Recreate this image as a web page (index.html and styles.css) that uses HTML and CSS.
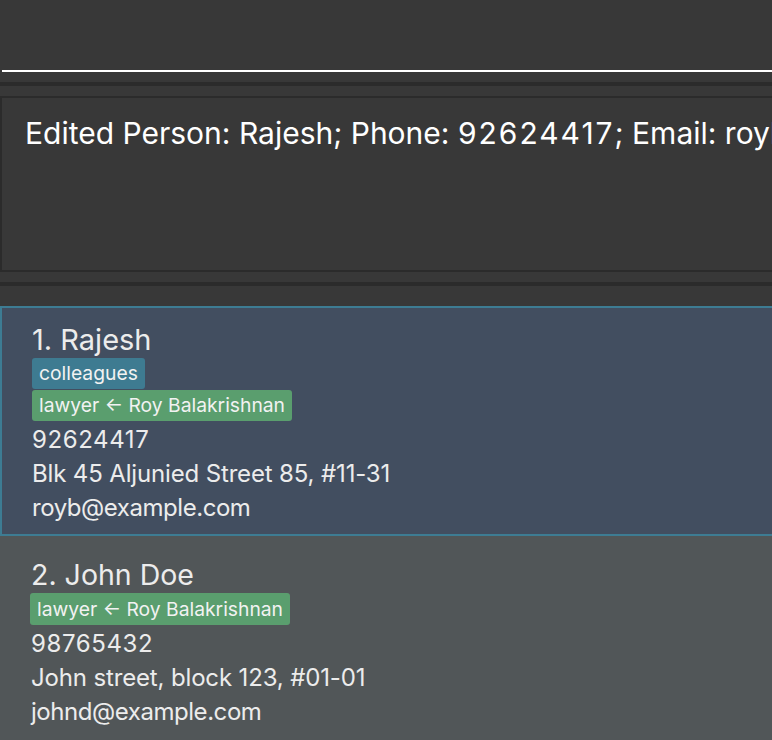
FILE: index.html
```html
<!DOCTYPE html>
<html>
<head>
<meta charset="utf-8">
<link rel="stylesheet" href="styles.css">
</head>
<body>
<div class="app">
  <div class="command">
    <div class="command-field"></div>
    <div class="command-line"></div>
  </div>
  <div class="spacer"></div>
  <div class="stripe"></div>
  <div class="spacer"></div>
  <div class="result">
    <div class="result-text">Edited Person: Rajesh; Phone: <span class="num">92624417</span>; Email: royb@example.com; Address: Blk 45 Aljunied Street 85, #11-31; Tags: [colleagues]</div>
  </div>
  <div class="spacer"></div>
  <div class="stripe"></div>
  <div class="spacer-lg"></div>
  <div class="list">
    <div class="card selected">
      <div class="name">1. Rajesh</div>
      <div class="tags">
        <span class="tag teal">colleagues</span>
        <span class="tag green">lawyer ← Roy Balakrishnan</span>
      </div>
      <div class="fields">
        <div class="field"><span class="num">92624417</span></div>
        <div class="field addr">Blk 45 Aljunied Street 85, #11-31</div>
        <div class="field">royb@example.com</div>
      </div>
    </div>
    <div class="card plain">
      <div class="name">2. John Doe</div>
      <div class="tags">
        <span class="tag green">lawyer ← Roy Balakrishnan</span>
      </div>
      <div class="fields">
        <div class="field"><span class="num">98765432</span></div>
        <div class="field addr">John street, block 123, #01-01</div>
        <div class="field">johnd@example.com</div>
      </div>
    </div>
  </div>
</div>
</body>
</html>
```
FILE: styles.css
```css
html, body {
  margin: 0;
  padding: 0;
  background: #383838;
  overflow: hidden;
}
body {
  font-family: Inter, "Noto Sans", sans-serif;
  width: 772px;
  height: 740px;
}
.app {
  display: flex;
  flex-direction: column;
}
.command-field {
  height: 70px;
}
.command-line {
  margin-left: 2px;
  height: 2px;
  background: #ffffff;
}
.spacer {
  height: 10px;
}
.spacer-lg {
  height: 20px;
}
.stripe {
  height: 4px;
  background: #2b2b2b;
}
.result {
  height: 172px;
  border: 2px solid #2b2b2b;
  border-right: none;
  background: #383838;
  padding-left: 23px;
  overflow: hidden;
}
.result-text {
  color: #ffffff;
  font-size: 30px;
  line-height: 36px;
  margin-top: 17px;
  white-space: nowrap;
}
.result-text .num {
  letter-spacing: 2px;
}
.list {
  display: flex;
  flex-direction: column;
}
.card {
  display: flex;
  flex-direction: column;
  color: #ececec;
}
.card.selected {
  background: #424e60;
  border: 2px solid #3d7c93;
  border-right: none;
  height: 212px;
  padding-left: 30px;
  padding-top: 14px;
}
.card.plain {
  background: #515658;
  padding-left: 31px;
  padding-top: 21px;
  height: 200px;
}
.name {
  font-size: 29px;
  line-height: 36px;
}
.plain .name {
  font-size: 28.5px;
}
.tags {
  display: flex;
  flex-direction: column;
  align-items: flex-start;
  gap: 1px;
}
.plain .tags {
  margin-left: -1px;
}
.tag {
  font-size: 19.3px;
  line-height: 31px;
  padding: 0 7px;
  border-radius: 3px;
  color: #f2f2f2;
}
.plain .tag {
  line-height: 32px;
}
.tag.teal {
  background: #3e7b91;
}
.tag.green {
  background: #5a9e6e;
}
.fields {
  margin-top: 2px;
}
.field {
  font-size: 24px;
  line-height: 34px;
  letter-spacing: -0.45px;
}
.field.addr {
  letter-spacing: -0.15px;
}
.field .num {
  letter-spacing: 0.6px;
}
```
